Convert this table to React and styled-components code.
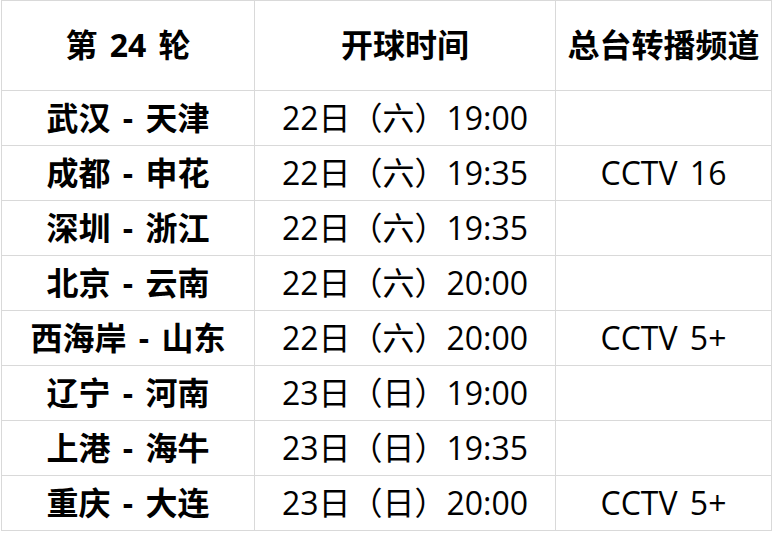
import React from "react";
import styled, { createGlobalStyle } from "styled-components";

const rows = [
  { match: "武汉 - 天津", time: "22日（六）19:00", channel: "" },
  { match: "成都 - 申花", time: "22日（六）19:35", channel: "CCTV 16" },
  { match: "深圳 - 浙江", time: "22日（六）19:35", channel: "" },
  { match: "北京 - 云南", time: "22日（六）20:00", channel: "" },
  { match: "西海岸 - 山东", time: "22日（六）20:00", channel: "CCTV 5+" },
  { match: "辽宁 - 河南", time: "23日（日）19:00", channel: "" },
  { match: "上港 - 海牛", time: "23日（日）19:35", channel: "" },
  { match: "重庆 - 大连", time: "23日（日）20:00", channel: "CCTV 5+" },
];

const GlobalStyle = createGlobalStyle`
  html, body {
    margin: 0;
    padding: 0;
    background: #fff;
  }
  body {
    font-family: "Open Sans", "Noto Sans CJK SC", sans-serif;
    color: #000;
  }
`;

const App = () => (
  <>
    <GlobalStyle />
    <Page>
      <Sheet>
        <Cell header>第 24 轮</Cell>
        <Cell header>开球时间</Cell>
        <Cell header>总台转播频道</Cell>
        {rows.map((r) => (
          <React.Fragment key={r.match}>
            <Cell bold>{r.match}</Cell>
            <Cell>{r.time}</Cell>
            <Cell>{r.channel}</Cell>
          </React.Fragment>
        ))}
      </Sheet>
    </Page>
  </>
);

export default App;

const Page = styled.div`
  padding-left: 1px;
  width: 778px;
  height: 539px;
  box-sizing: border-box;
  background: #fff;
`;

const Sheet = styled.div`
  display: grid;
  grid-template-columns: 253px 301px 216px;
  grid-template-rows: 90px repeat(8, 55px);
  width: max-content;
  border-top: 1px solid #d9d9d9;
  border-left: 1px solid #d9d9d9;
`;

const Cell = styled.div`
  box-sizing: border-box;
  display: flex;
  align-items: center;
  justify-content: center;
  border-right: 1px solid #d9d9d9;
  border-bottom: 1px solid #d9d9d9;
  font-size: 32px;
  font-weight: ${({ header, bold }) => (header || bold ? 700 : 400)};
  word-spacing: 4px;
  white-space: pre;
  line-height: 1;
  padding-bottom: ${({ header }) => (header ? "2px" : "0")};
`;
